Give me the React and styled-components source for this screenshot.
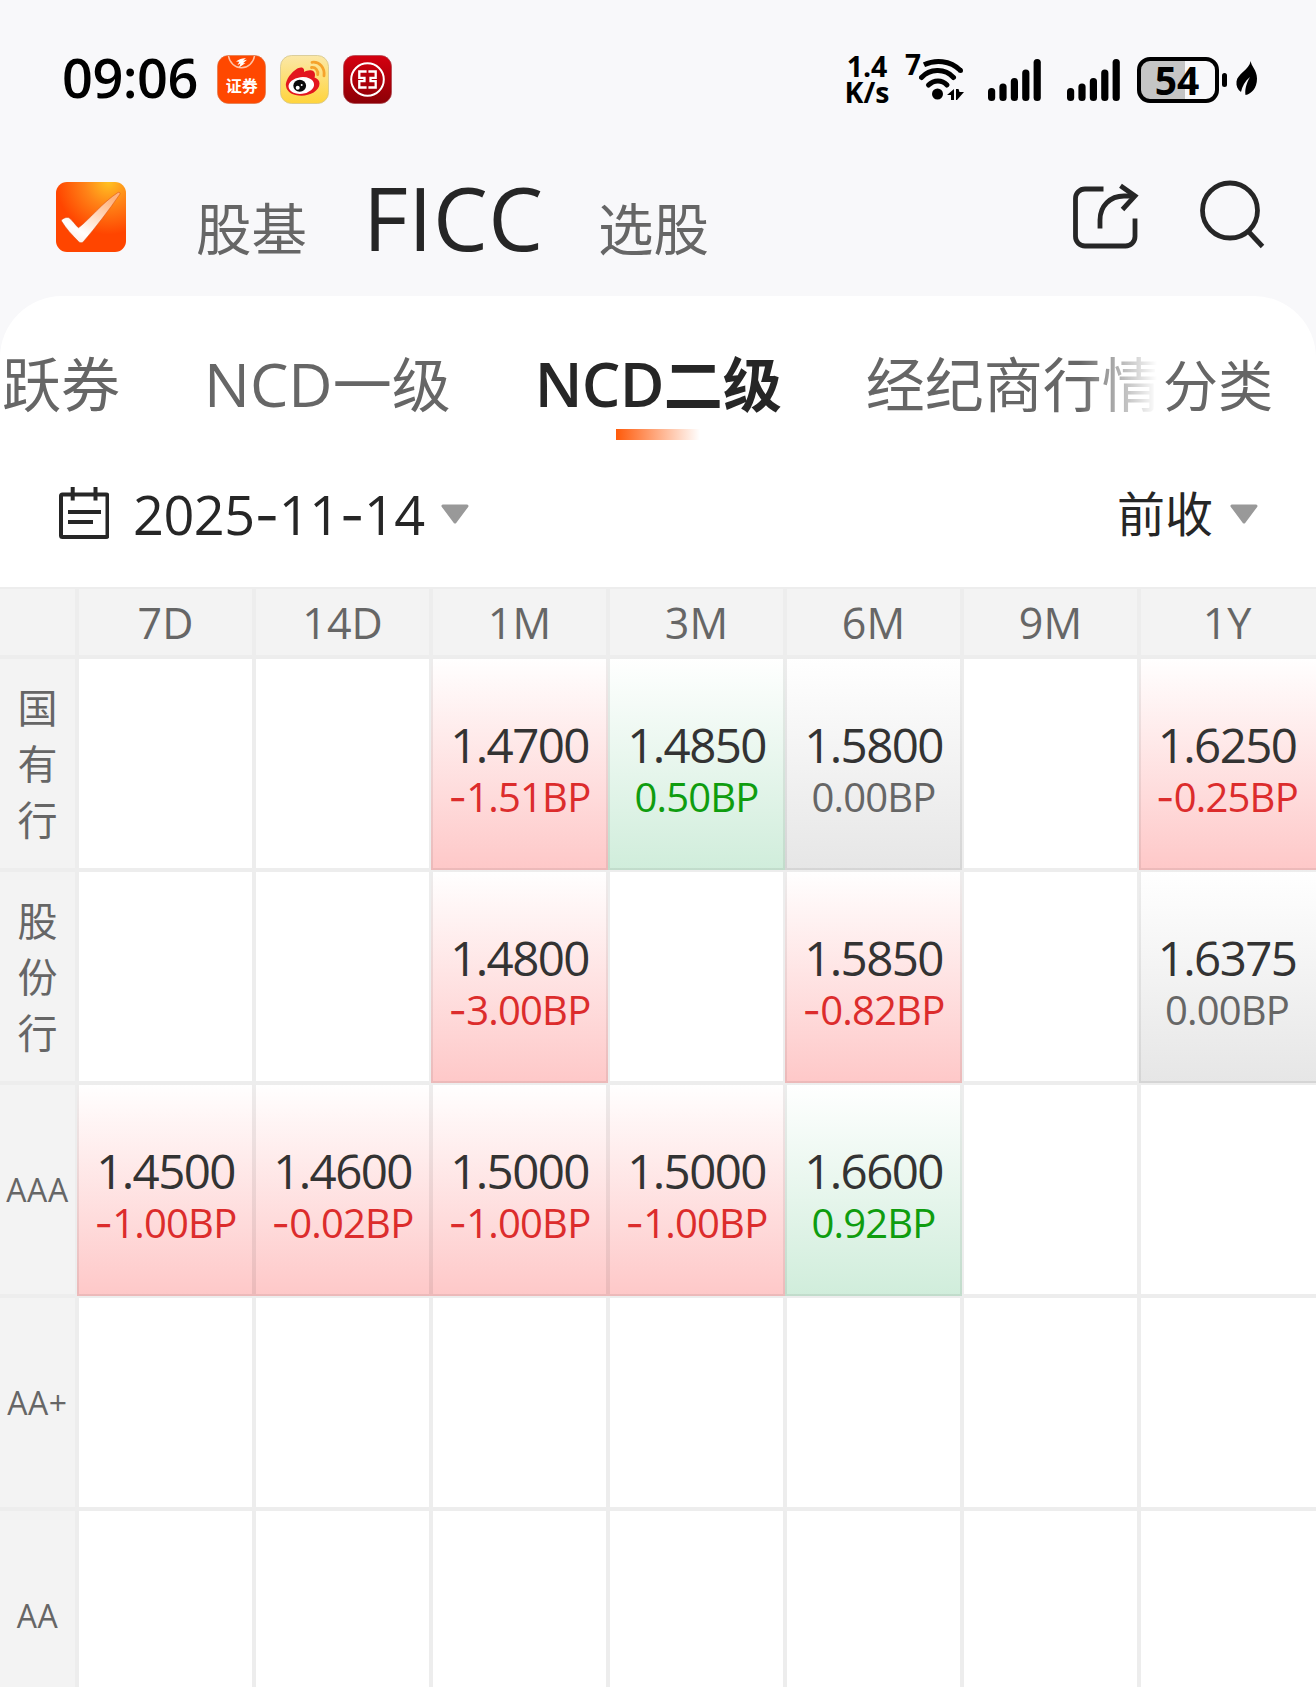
import styled, { createGlobalStyle, css } from 'styled-components'

const tenors = ['7D', '14D', '1M', '3M', '6M', '9M', '1Y']

const rows = [
  {
    name: '国有行',
    vertical: true,
    quotes: {
      '1M': ['1.4700', '-1.51BP', 'down'],
      '3M': ['1.4850', '0.50BP', 'up'],
      '6M': ['1.5800', '0.00BP', 'flat'],
      '1Y': ['1.6250', '-0.25BP', 'down'],
    },
  },
  {
    name: '股份行',
    vertical: true,
    quotes: {
      '1M': ['1.4800', '-3.00BP', 'down'],
      '6M': ['1.5850', '-0.82BP', 'down'],
      '1Y': ['1.6375', '0.00BP', 'flat'],
    },
  },
  {
    name: 'AAA',
    quotes: {
      '7D': ['1.4500', '-1.00BP', 'down'],
      '14D': ['1.4600', '-0.02BP', 'down'],
      '1M': ['1.5000', '-1.00BP', 'down'],
      '3M': ['1.5000', '-1.00BP', 'down'],
      '6M': ['1.6600', '0.92BP', 'up'],
    },
  },
  { name: 'AA+', quotes: {} },
  { name: 'AA', quotes: {} },
]

const tabs = [
  { label: '跃券' },
  { latin: 'NCD', label: '一级' },
  { latin: 'NCD', label: '二级', active: true },
  { label: '经纪商行情' },
]

const trends = {
  down: { text: '#dc2c2c', fill: '#fec8c8' },
  up: { text: '#0f9d0f', fill: '#d0eddb' },
  flat: { text: '#666', fill: '#e6e6e6' },
}

export default function App() {
  return (
    <>
      <GlobalStyle />
      <Screen>
        <StatusBar />
        <Header />
        <Panel>
          <TabBar />
          <Filters />
          <QuoteTable />
        </Panel>
      </Screen>
    </>
  )
}

function StatusBar() {
  return (
    <Status>
      <Clock>09:06</Clock>
      <AppIcons>
        <SecuritiesIcon />
        <WeiboIcon />
        <BankIcon />
      </AppIcons>
      <Speed>
        <span>1.4</span>
        <span>K/s</span>
      </Speed>
      <WifiBadge>7</WifiBadge>
      <WifiIcon />
      <SignalIcon />
      <SignalIcon />
      <Battery>54</Battery>
      <BatteryNub />
      <LeafIcon />
    </Status>
  )
}

function Header() {
  return (
    <Top>
      <LogoIcon />
      <TopLink $left={70}>股基</TopLink>
      <TopTitle>FICC</TopTitle>
      <TopLink $left={51}>选股</TopLink>
      <Actions>
        <ShareIcon />
        <SearchIcon />
      </Actions>
    </Top>
  )
}

function TabBar() {
  return (
    <TabRow>
      <TabStrip>
        {tabs.map(({ latin, label, active }) => (
          <Tab key={latin + label} $active={active}>
            {latin && <Latin $active={active}>{latin}</Latin>}
            {label}
          </Tab>
        ))}
      </TabStrip>
      <Category>分类</Category>
    </TabRow>
  )
}

function Filters() {
  return (
    <FilterRow>
      <CalendarIcon />
      <DateText><Dashed text="2025-11-14" /></DateText>
      <Caret />
      <PriceType>前收</PriceType>
      <Caret />
    </FilterRow>
  )
}

function QuoteTable() {
  return (
    <Table>
      <HeadRow>
        <HeadCell />
        {tenors.map(tenor => <HeadCell key={tenor}>{tenor}</HeadCell>)}
      </HeadRow>
      {rows.map(({ name, vertical, quotes }) => (
        <Row key={name}>
          <RowName $vertical={vertical}>
            {vertical ? [...name].map(char => <span key={char}>{char}</span>) : name}
          </RowName>
          {tenors.map(tenor => {
            const [price, change, trend] = quotes[tenor] || []

            return (
              <Cell key={tenor} $trend={trend}>
                {price && <Price>{price}</Price>}
                {price && <Change $trend={trend}><Dashed text={change} /></Change>}
              </Cell>
            )
          })}
        </Row>
      ))}
    </Table>
  )
}

// hyphens use a wider glyph that sits at digit height
function Dashed({ text }) {
  return text.split(/(-)/).map((part, i) => part === '-' ? <Dash key={i}>-</Dash> : part)
}

function SecuritiesIcon() {
  return (
    <svg width="49" height="49" viewBox="0 0 49 49">
      <rect x=".5" y=".5" width="48" height="48" rx="11" fill="#ff4800" stroke="#d9703f" strokeWidth=".6" />
      <path d="M11.500 1a13.200 14.300 0 0 0 26 0" fill="none" stroke="#ffc3a6" strokeWidth="1.500" />
      <path d="M19 6.500c4-3 7-3.500 10-3.200l-3 2.200 4-.7-4 3.500 2.500-.2-6.500 4.400 1.500-4-3 1.500 1.800-3.200z" fill="#fff" />
      <text x="24.700" y="36.500" textAnchor="middle" fontFamily="'Noto Sans CJK SC', sans-serif" fontWeight="700" fontSize="16" fill="#fff">证券</text>
    </svg>
  )
}

function WeiboIcon() {
  return (
    <svg width="49" height="49" viewBox="0 0 49 49">
      <defs>
        <linearGradient id="weiboBg" x1="0" y1="0" x2="0" y2="1">
          <stop offset="0" stopColor="#fbe8a8" />
          <stop offset="1" stopColor="#ffd43c" />
        </linearGradient>
      </defs>
      <rect x=".5" y=".5" width="48" height="48" rx="11" fill="url(#weiboBg)" stroke="#d3c58e" strokeWidth=".8" />
      <path d="M31.500 12.500c4-.6 7 3 6.200 7.200M32 7.300c7.500-1 13 5.500 12 13.500" fill="none" stroke="#f5a32c" strokeWidth="2.800" strokeLinecap="round" />
      <path d="M6 31c-1-7 9-18.500 15-18.500 3 0 3.500 2.500 3 4.500 4-2.500 11-3 11 3 0 1-.3 2-.5 2.600 3 .9 5 3 5 6C39.500 36 30 40.800 21.500 40.800 13 40.800 6.700 37 6 31z" fill="#e3161e" />
      <ellipse cx="21.300" cy="30.500" rx="12.800" ry="8.300" fill="#fff" transform="rotate(-7 21.300 30.500)" />
      <ellipse cx="19.700" cy="30.700" rx="6.400" ry="6" fill="#0a0a0a" />
      <circle cx="17.700" cy="32.700" r="2" fill="#fff" />
      <circle cx="21.700" cy="30" r="1" fill="#fff" />
    </svg>
  )
}

function BankIcon() {
  return (
    <svg width="49" height="49" viewBox="0 0 49 49">
      <defs>
        <linearGradient id="bankBg" x1="0" y1="0" x2="0" y2="1">
          <stop offset="0" stopColor="#d5000f" />
          <stop offset="1" stopColor="#8c0006" />
        </linearGradient>
      </defs>
      <rect x=".5" y=".5" width="48" height="48" rx="11" fill="url(#bankBg)" stroke="#a9444a" strokeWidth=".7" />
      <circle cx="24.500" cy="24.500" r="16.300" fill="none" stroke="#fff" strokeWidth="2" />
      <path d="M23.600 16.500h-7.300v6.300h5.200v3.400h-5.200v6.300h7.300M25.400 16.500h7.300v6.300h-5.200v3.400h5.200v6.300h-7.300" fill="none" stroke="#fff" strokeWidth="2.300" />
    </svg>
  )
}

function WifiIcon() {
  return (
    <svg width="48" height="44" viewBox="0 0 48 44">
      <g fill="none" stroke="#000" strokeWidth="5">
        <path d="M5 6.800C16 1.500 31 2 41.500 12.500" />
        <path d="M2.500 19.500c8-8.500 23-10 32 0" strokeLinecap="round" />
        <path d="M9.500 27c5.500-5.500 13.500-5.500 18.500 0" strokeLinecap="round" />
      </g>
      <circle cx="41.500" cy="12.500" r="2.500" />
      <circle cx="18.500" cy="36" r="5.500" />
      <path d="M28 37l7-6v11h-3v-5zM37 31h2.500l1 3h4.500l-7 8h-1z" />
    </svg>
  )
}

function SignalIcon() {
  return (
    <Signal width="53" height="42" viewBox="0 0 53 42">
      {[29, 24.500, 19, 10.500, 0].map((top, i) => (
        <rect key={top} x={i * 11.400} y={top} width="7.200" height={42 - top} rx="3.500" />
      ))}
    </Signal>
  )
}

function LeafIcon() {
  return (
    <Leaf width="22" height="34" viewBox="0 0 22 34">
      <path d="M14.700 0c.3 5 6.300 9 6.300 17.500C21 27 15.500 33 9.500 34c-.8-5 .5-11 4.500-18C9 20 6 25.500 5 31 1.500 28.500 0 25 .5 20.500 1.200 13 13 9 14.700 0z" />
    </Leaf>
  )
}

function LogoIcon() {
  return (
    <svg width="70" height="70" viewBox="0 0 70 70">
      <defs>
        <radialGradient id="logoBg" cx=".75" cy="0" r=".75">
          <stop offset="0" stopColor="#ffc222" />
          <stop offset=".45" stopColor="#ff8317" />
          <stop offset="1" stopColor="#ff4500" />
        </radialGradient>
        <linearGradient id="logoTick" x1="0" y1="1" x2=".7" y2="0">
          <stop offset="0" stopColor="#ffe3d5" />
          <stop offset=".3" stopColor="#fff" />
          <stop offset="1" stopColor="#ffb27c" />
        </linearGradient>
      </defs>
      <rect width="70" height="70" rx="11" fill="url(#logoBg)" />
      <path d="M5.500 39c-.8-2 5.500-4.500 7.500-3.200 3 2 6.500 7.500 9.500 10C33 38 47 20 62 10.500c1.500-.8 2.500.5 1.800 1.800C53 28 40 45 27.500 59.500c-1.500 1.700-3.500 1.500-5 0C16 53 10 46.500 5.500 39z" fill="url(#logoTick)" stroke="#d94a12" strokeOpacity=".5" />
    </svg>
  )
}

function ShareIcon() {
  return (
    <svg width="66" height="70" viewBox="0 -2 66 70" fill="none" stroke="#262626" strokeWidth="4.800">
      <path d="M30.500 5H12A9.500 9.500 0 0 0 2.500 14.500v38A9.500 9.500 0 0 0 12 62h40.500a9.500 9.500 0 0 0 9.500-9.500V34.500" />
      <path d="M27 44.500V36c0-14 10-24 24-24h11" />
      <path d="M47.500 1.800L62 12 49.500 25.500" />
    </svg>
  )
}

function SearchIcon() {
  return (
    <svg width="66" height="70" viewBox="0 2 66 70" overflow="visible" fill="none" stroke="#262626" strokeWidth="4.800">
      <circle cx="31" cy="30.500" r="27.500" />
      <path d="M49 51l14.500 15.500" />
    </svg>
  )
}

function CalendarIcon() {
  return (
    <Calendar width="51" height="52" viewBox="0 0 51 52" fill="none" stroke="#262626" strokeWidth="4">
      <rect x="3" y="7.500" width="46.500" height="42.500" rx="1.500" />
      <path d="M14.700 0v13.500M37.500 0v13.500M10 25h33M10 35h25" />
    </Calendar>
  )
}

function Caret() {
  return (
    <svg width="28" height="20" viewBox="0 0 28 20">
      <path d="M2 2h24L14 18z" fill="#999" stroke="#999" strokeWidth="3" strokeLinejoin="round" />
    </svg>
  )
}

const GlobalStyle = createGlobalStyle`
  * {
    box-sizing: border-box;
  }

  body {
    margin: 0;
    background-color: #f8f8fa;
    font-family: 'Open Sans', 'Noto Sans CJK SC', sans-serif;
  }

  svg {
    display: block;
    flex: none;
  }
`

const Screen = styled.main`
  width: 1316px;
  height: 1687px;
  overflow: hidden;
  color: #262626;
`

const Status = styled.div`
  display: flex;
  align-items: center;
  height: 159px;
  padding-left: 61px;
  color: #000;
`

const Clock = styled.span`
  width: 156px;
  padding-left: 1px;
  margin-bottom: 6px;
  font-size: 54px;
  font-weight: 600;
  line-height: 60px;
  letter-spacing: -.5px;
`

const AppIcons = styled.div`
  display: flex;
  gap: 14px;
`

const Speed = styled.div`
  display: flex;
  flex-direction: column;
  align-items: center;
  width: 46px;
  margin: 0 0 2px 452px;
  font-size: 28.5px;
  font-weight: 700;
  line-height: 26px;
`

const WifiBadge = styled.span`
  width: 14px;
  margin: 0 0 32px 15px;
  font-size: 28px;
  font-weight: 700;
  line-height: 28px;
`

const Signal = styled.svg`
  margin-left: 21px;

  & + & {
    margin-left: 26px;
  }
`

const Battery = styled.div`
  width: 82px;
  height: 46px;
  margin-left: 17px;
  padding-right: 2px;
  border: 4px solid #000;
  border-radius: 13px;
  background: linear-gradient(to right, #c5c5c5 60%, transparent 60%);
  font-size: 39px;
  font-weight: 700;
  line-height: 37px;
  text-align: center;
`

const BatteryNub = styled.div`
  width: 5px;
  height: 14px;
  margin-left: 3px;
  border-radius: 3px;
  background-color: #000;
`

const Leaf = styled.svg`
  margin: 0 0 4px 9px;
`

const Top = styled.header`
  display: flex;
  align-items: flex-start;
  height: 137px;
  padding: 23px 51px 0 56px;
`

const TopLink = styled.span`
  margin: 12px 0 0 ${({ $left }) => $left}px;
  color: #666;
  font-size: 55.5px;
  line-height: 70px;
`

const TopTitle = styled.h1`
  width: 184px;
  margin: -10px 0 0 56px;
  font-size: 87px;
  font-weight: 500;
  line-height: 90px;
  letter-spacing: .4px;
`

const Actions = styled.div`
  display: flex;
  gap: 60px;
  margin-left: auto;
`

const Panel = styled.section`
  height: 1391px;
  border-radius: 62px 62px 0 0;
  background-color: #fff;
  overflow: hidden;
`

const TabRow = styled.nav`
  display: flex;
  height: 145px;
  padding-top: 47px;
`

const TabStrip = styled.div`
  display: flex;
  gap: 84px;
  width: 1157px;
  padding-left: 2px;
  overflow: hidden;
  white-space: nowrap;
  mask-image: linear-gradient(to right, #000 1080px, transparent 1157px);
`

const Tab = styled.span`
  flex: none;
  color: #666;
  font-size: 59px;
  line-height: 82px;

  ${({ $active }) => $active && css`
    color: #262626;
    font-weight: 700;

    &::after {
      content: '';
      display: block;
      width: 84px;
      height: 11px;
      margin: 4px 0 0 81px;
      background: linear-gradient(to right, #ff5a0a, #fff);
    }
  `}
`

const Latin = styled.span`
  font-size: 61px;
  font-weight: ${({ $active }) => $active ? 600 : 400};
  letter-spacing: ${({ $active }) => $active ? -.7 : 0}px;
`

const Category = styled.span`
  margin-left: 6px;
  color: #666;
  font-size: 55px;
  line-height: 83px;
`

const FilterRow = styled.div`
  display: flex;
  align-items: center;
  height: 146px;
  padding: 0 58px;
`

const Calendar = styled.svg`
  margin-bottom: 2px;
`

const DateText = styled.span`
  width: 308px;
  margin: 2px 0 0 24px;
  font-size: 54px;
  line-height: 60px;
  letter-spacing: -.5px;
`

const Dash = styled.span`
  font-family: Inter, sans-serif;
`

const PriceType = styled.span`
  margin: 0 17px 0 auto;
  font-size: 48px;
  line-height: 60px;
`

const Table = styled.div`
  width: 1316px;
`

const Row = styled.div`
  display: grid;
  grid-template-columns: 77px repeat(7, 177px);
  height: 213px;
`

const HeadRow = styled(Row)`
  height: 70px;
`

const cellBase = css`
  display: flex;
  flex-direction: column;
  align-items: center;
  justify-content: center;
  border: 2px solid rgba(0, 0, 0, .07);

  &:first-child {
    border-left: 0;
  }

  &:last-child {
    padding-right: 3px;
    border-right: 0;
  }
`

const HeadCell = styled.div`
  ${cellBase}
  padding-top: 2px;
  border-color: #ededed;
  background-color: #f3f3f3;
  color: #666;
  font-size: 43px;
  line-height: 50px;
`

const RowName = styled.div`
  ${cellBase}
  border-color: #ededed;
  background-color: #f3f3f3;
  color: #666;
  font-size: ${({ $vertical }) => $vertical ? 40 : 32}px;
  line-height: 56px;
  letter-spacing: ${({ $vertical }) => $vertical ? 0 : .6}px;
`

const Cell = styled.div`
  ${cellBase}
  padding-top: 13px;
  ${({ $trend }) => $trend && css`
    background: linear-gradient(to bottom, #fff, ${trends[$trend].fill}) border-box;
  `}
`

const Price = styled.span`
  color: #333;
  font-size: 47.5px;
  line-height: 54px;
  letter-spacing: -1.6px;
`

const Change = styled.span`
  color: ${({ $trend }) => trends[$trend].text};
  font-size: 40px;
  line-height: 50px;
  letter-spacing: -.8px;
`
